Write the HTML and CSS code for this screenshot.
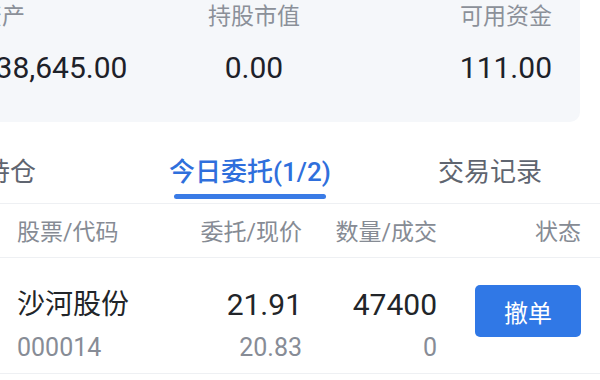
FILE: index.html
```html
<!DOCTYPE html>
<html lang="zh-CN">
<head>
  <meta charset="UTF-8">
  <meta name="viewport" content="width=device-width, initial-scale=1.0">
  <title>委托</title>
  <link rel="stylesheet" href="styles.css">
</head>
<body>
  <div class="page">
    <!-- 资产概览 -->
    <div class="summary">
      <div class="summary-item left">
        <span class="summary-label">总资产</span>
        <span class="summary-value">1,138,645.00</span>
      </div>
      <div class="summary-item center">
        <span class="summary-label">持股市值</span>
        <span class="summary-value">0.00</span>
      </div>
      <div class="summary-item right">
        <span class="summary-label">可用资金</span>
        <span class="summary-value">111.00</span>
      </div>
    </div>

    <!-- 标签页 -->
    <div class="tabs">
      <div class="tab">持仓</div>
      <div class="tab active">今日委托(1/2)</div>
      <div class="tab">交易记录</div>
    </div>

    <!-- 委托列表 -->
    <div class="table">
      <div class="table-head">
        <span class="col-name">股票/代码</span>
        <span class="col-num">委托/现价</span>
        <span class="col-num">数量/成交</span>
        <span class="col-num">状态</span>
      </div>
      <div class="table-row">
        <div class="col-name">
          <div class="main">沙河股份</div>
          <div class="sub">000014</div>
        </div>
        <div class="col-num">
          <div class="main num">21.91</div>
          <div class="sub">20.83</div>
        </div>
        <div class="col-num">
          <div class="main num">47400</div>
          <div class="sub">0</div>
        </div>
        <div class="col-action">
          <button class="cancel-btn">撤单</button>
        </div>
      </div>
    </div>
  </div>
</body>
</html>
```

FILE: styles.css
```css
/* Style global */
body {
  margin: 0;
  background: #ffffff;
  font-family: Roboto, "Noto Sans CJK SC", sans-serif;
  overflow: hidden;
  width: 600px;
  height: 380px;
}

/* la page est plus large que la fenêtre, coupée à gauche */
.page {
  margin-left: -110px;
  width: 720px;
}

/* Résumé des actifs */
.summary {
  display: grid;
  grid-template-columns: 1fr 1fr 1fr;
  background: #f5f7fa;
  border-radius: 0 0 10px 10px;
  margin-right: 30px;
  padding: 0 28px 36px 66px;
}

.summary-item {
  display: flex;
  flex-direction: column;
}

.summary-item.left { align-items: flex-start; }
.summary-item.center { align-items: center; }
.summary-item.right { align-items: flex-end; }

.summary-label {
  font-size: 23px;
  line-height: 34px;
  color: #8b9099;
}

.summary-value {
  margin-top: 16px;
  font-size: 30px;
  line-height: 36px;
  color: #1d2129;
}

/* Onglets */
.tabs {
  display: grid;
  grid-template-columns: 1fr 1fr 1fr;
  padding-top: 32px;
  border-bottom: 1px solid #eef0f3;
}

.tab {
  display: flex;
  flex-direction: column;
  align-items: center;
  font-size: 26px;
  line-height: 36px;
  color: #5f6570;
}

.tab::after {
  content: "";
  width: 152px;
  height: 5px;
  margin: 4px 0 4px;
  border-radius: 3px;
  background: transparent;
}

.tab.active {
  color: #2f6fdc;
  font-weight: 500;
}

.tab.active::after {
  background: #3a7be6;
}

/* Tableau */
.table-head,
.table-row {
  display: grid;
  grid-template-columns: 150px 135px 135px 144px;
  padding: 0 29px 0 127px;
  border-bottom: 1px solid #eef0f3;
}

.table-head {
  padding-top: 14px;
  padding-bottom: 9px;
  font-size: 23px;
  line-height: 30px;
  color: #868b94;
}

.table-row {
  padding-top: 29px;
  padding-bottom: 10px;
}

.col-name { text-align: left; }
.col-num { text-align: right; }

.main {
  font-size: 28px;
  line-height: 36px;
  color: #222529;
}

.main.num {
  font-size: 30px;
}

.sub {
  margin-top: 10px;
  font-size: 25px;
  line-height: 30px;
  color: #878c96;
}

.col-action {
  display: flex;
  justify-content: flex-end;
  align-items: flex-start;
}

.cancel-btn {
  margin-top: -2px;
  width: 106px;
  height: 52px;
  border: none;
  border-radius: 5px;
  background: #3078e6;
  color: #ffffff;
  font-family: "Noto Sans CJK SC", sans-serif;
  font-size: 24px;
  cursor: pointer;
}
```
